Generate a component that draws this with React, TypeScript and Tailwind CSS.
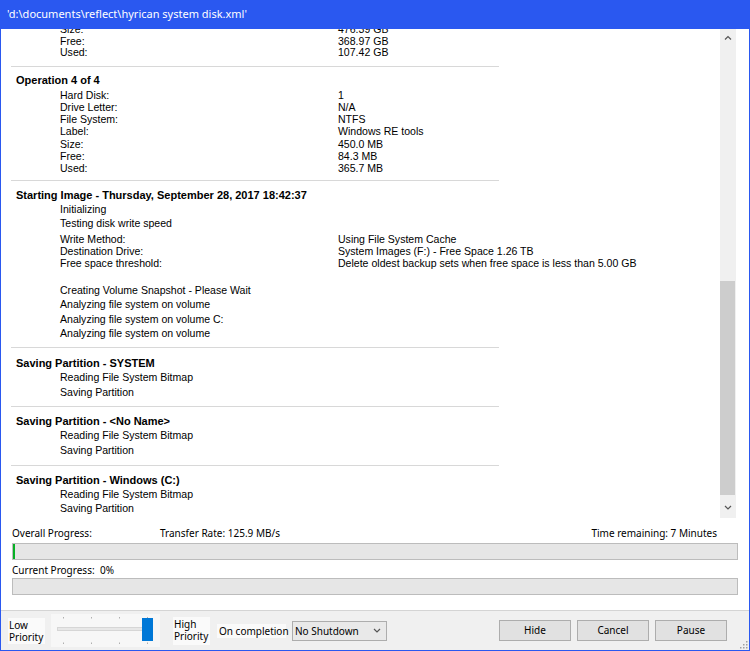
import React from "react";

const LOG = "font-['Liberation_Sans',Arial,sans-serif] text-[10.55px] text-black";
const UI = "font-['Noto_Sans',sans-serif] text-[10px] text-black";

function Sep({ cls }: { cls: string }) {
  return <div className={`ml-[10px] w-[488px] h-px bg-[#d8d8d8] ${cls}`} />;
}

function Header({ cls, children }: { cls: string; children: React.ReactNode }) {
  return (
    <div className={`h-[14px] leading-[14px] pl-[15px] font-bold text-[11px] whitespace-nowrap ${cls}`}>
      {children}
    </div>
  );
}

function Status({ children, cls = "" }: { children: React.ReactNode; cls?: string }) {
  return <div className={`h-[14.5px] leading-[14.5px] pl-[59px] whitespace-nowrap ${cls}`}>{children}</div>;
}

function Detail({ label, value, h }: { label: string; value: string; h: string }) {
  return (
    <div className={`grid grid-cols-[278px_1fr] pl-[59px] whitespace-nowrap ${h}`}>
      <span>{label}</span>
      <span>{value}</span>
    </div>
  );
}

function Chevron({ up }: { up?: boolean }) {
  return (
    <svg width="8" height="5" viewBox="0 0 8 5">
      <path
        d={up ? "M1 4.5 L4 1.5 L7 4.5" : "M1 1 L4 4 L7 1"}
        fill="none"
        stroke="#555"
        strokeWidth="1.2"
      />
    </svg>
  );
}

export default function App() {
  return (
    <div className="w-[750px] h-[651px] bg-[#2a58f0] flex flex-col px-px pb-px overflow-hidden">
      {/* title bar */}
      <div className="h-[29px] shrink-0 flex items-center pl-[7px] -mx-px font-['Noto_Sans',sans-serif] text-[11px] text-white whitespace-nowrap">
        'd:\documents\reflect\hyrican system disk.xml'
      </div>

      <div className="flex-1 flex flex-col bg-white">
        {/* log + scrollbar */}
        <div className="h-[489px] shrink-0 flex">
          <div className={`w-[719px] overflow-hidden ${LOG}`}>
            <div className="-mt-[5px]">
              <Detail label="Size:" value="476.39 GB" h="h-[11.7px] leading-[11.7px]" />
              <Detail label="Free:" value="368.97 GB" h="h-[11.7px] leading-[11.7px]" />
              <Detail label="Used:" value="107.42 GB" h="h-[11.7px] leading-[11.7px]" />
            </div>
            <Sep cls="mt-[6.6px]" />
            <Header cls="mt-[6.6px]">Operation 4 of 4</Header>
            <div className="mt-[1.6px]">
              <Detail label="Hard Disk:" value="1" h="h-[12.2px] leading-[12.2px]" />
              <Detail label="Drive Letter:" value="N/A" h="h-[12.2px] leading-[12.2px]" />
              <Detail label="File System:" value="NTFS" h="h-[12.2px] leading-[12.2px]" />
              <Detail label="Label:" value="Windows RE tools" h="h-[12.2px] leading-[12.2px]" />
              <Detail label="Size:" value="450.0 MB" h="h-[12.2px] leading-[12.2px]" />
              <Detail label="Free:" value="84.3 MB" h="h-[12.2px] leading-[12.2px]" />
              <Detail label="Used:" value="365.7 MB" h="h-[12.2px] leading-[12.2px]" />
            </div>
            <Sep cls="mt-[5.7px]" />
            <Header cls="mt-[7px]">Starting Image - Thursday, September 28, 2017 18:42:37</Header>
            <Status>Initializing</Status>
            <Status>Testing disk write speed</Status>
            <div className="mt-[2px]">
              <Detail label="Write Method:" value="Using File System Cache" h="h-[12px] leading-[12px]" />
              <Detail label="Destination Drive:" value="System Images (F:) - Free Space 1.26 TB" h="h-[12px] leading-[12px]" />
              <Detail
                label="Free space threshold:"
                value="Delete oldest backup sets when free space is less than 5.00 GB"
                h="h-[12px] leading-[12px]"
              />
            </div>
            <Status cls="mt-[13.75px]">Creating Volume Snapshot - Please Wait</Status>
            <Status>Analyzing file system on volume</Status>
            <Status>Analyzing file system on volume C:</Status>
            <Status>Analyzing file system on volume</Status>
            <Sep cls="mt-[6.5px]" />
            <Header cls="mt-[8px]">Saving Partition - SYSTEM</Header>
            <Status>Reading File System Bitmap</Status>
            <Status>Saving Partition</Status>
            <Sep cls="mt-[6.8px]" />
            <Header cls="mt-[7.4px]">Saving Partition - &lt;No Name&gt;</Header>
            <Status>Reading File System Bitmap</Status>
            <Status>Saving Partition</Status>
            <Sep cls="mt-[7.6px]" />
            <Header cls="mt-[6.7px]">Saving Partition - Windows (C:)</Header>
            <Status>Reading File System Bitmap</Status>
            <Status>Saving Partition</Status>
          </div>

          {/* scrollbar */}
          <div className="w-[16px] bg-[#f0f0f0] flex flex-col">
            <div className="h-[17px] flex items-center justify-center">
              <Chevron up />
            </div>
            <div className="flex-1 pt-[235px]">
              <div className="h-[214px] w-[15px] bg-[#cdcdcd]" />
            </div>
            <div className="h-[22px] flex items-center justify-center">
              <Chevron />
            </div>
          </div>
        </div>

        {/* progress section */}
        <div className={`h-[92px] shrink-0 px-[11px] ${UI}`}>
          <div className="mt-[8px] h-[14px] leading-[14px] flex whitespace-nowrap pr-[21px]">
            <span className="w-[148px]">Overall Progress:</span>
            <span className="flex-1">Transfer Rate: 125.9 MB/s</span>
            <span>Time remaining: 7 Minutes</span>
          </div>
          <div className="mt-[2.5px] h-[17px] border border-[#bcbcbc] bg-[#e6e6e6] flex">
            <div className="w-[2px] bg-[#06b025]" />
          </div>
          <div className="mt-[3px] h-[14px] leading-[14px] flex whitespace-nowrap">
            <span className="w-[88px]">Current Progress:</span>
            <span>0%</span>
          </div>
          <div className="mt-[1px] h-[17px] border border-[#bcbcbc] bg-[#e6e6e6]" />
        </div>

        <div className="h-px bg-[#d4d4d4] shrink-0" />

        {/* bottom panel */}
        <div className={`relative flex-1 bg-[#f0f0f0] flex items-center ${UI}`}>
          <div className="ml-[7px] w-[37px] h-[26px] bg-[#fafafa] leading-[12px] pl-[1px] pt-px">
            Low
            <br />
            Priority
          </div>
          <div className="ml-[6px] w-[109px] h-[33px] bg-[#f7f7f7]">
            <svg width="109" height="33" viewBox="0 0 109 33">
              <rect x="6.5" y="13.5" width="89" height="3" fill="#e7e7e7" stroke="#d6d6d6" />
              {[12, 40, 68, 96].map((x) => (
                <g key={x}>
                  <rect x={x} y="3" width="1" height="1.5" fill="#b0b0b0" />
                  <rect x={x} y="28.5" width="1" height="1.5" fill="#b0b0b0" />
                </g>
              ))}
              <rect x="91" y="4" width="11" height="23" fill="#0078d7" />
            </svg>
          </div>
          <div className="ml-[13px] w-[37px] h-[28px] bg-[#fafafa] leading-[12px] pl-px pt-[1px]">
            High
            <br />
            Priority
          </div>
          <div className="ml-[7px] w-[69px] h-[14px] bg-[#fafafa] leading-[14px] pl-[2px] whitespace-nowrap">
            On completion
          </div>
          <div className="ml-[6px] w-[95px] h-[20px] border border-[#adadad] bg-[#e9e9e9] flex items-center pl-[2px] pr-[5px] justify-between">
            <span className="leading-[14px]">No Shutdown</span>
            <Chevron />
          </div>
          <div className="flex-1" />
          <div className="w-[72px] h-[21px] border border-[#adadad] bg-[#e1e1e1] flex items-center justify-center">
            Hide
          </div>
          <div className="ml-[6px] w-[72px] h-[21px] border border-[#adadad] bg-[#e1e1e1] flex items-center justify-center">
            Cancel
          </div>
          <div className="ml-[6px] mr-[22px] w-[72px] h-[21px] border border-[#adadad] bg-[#e1e1e1] flex items-center justify-center">
            Pause
          </div>
          <svg className="absolute right-[1px] bottom-[1px]" width="9" height="9" viewBox="0 0 9 9">
            {[
              [7, 1],
              [4, 4],
              [7, 4],
              [1, 7],
              [4, 7],
              [7, 7],
            ].map(([x, y]) => (
              <rect key={`${x}-${y}`} x={x} y={y} width="1.5" height="1.5" fill="#a0a0a0" />
            ))}
          </svg>
        </div>
      </div>
    </div>
  );
}
